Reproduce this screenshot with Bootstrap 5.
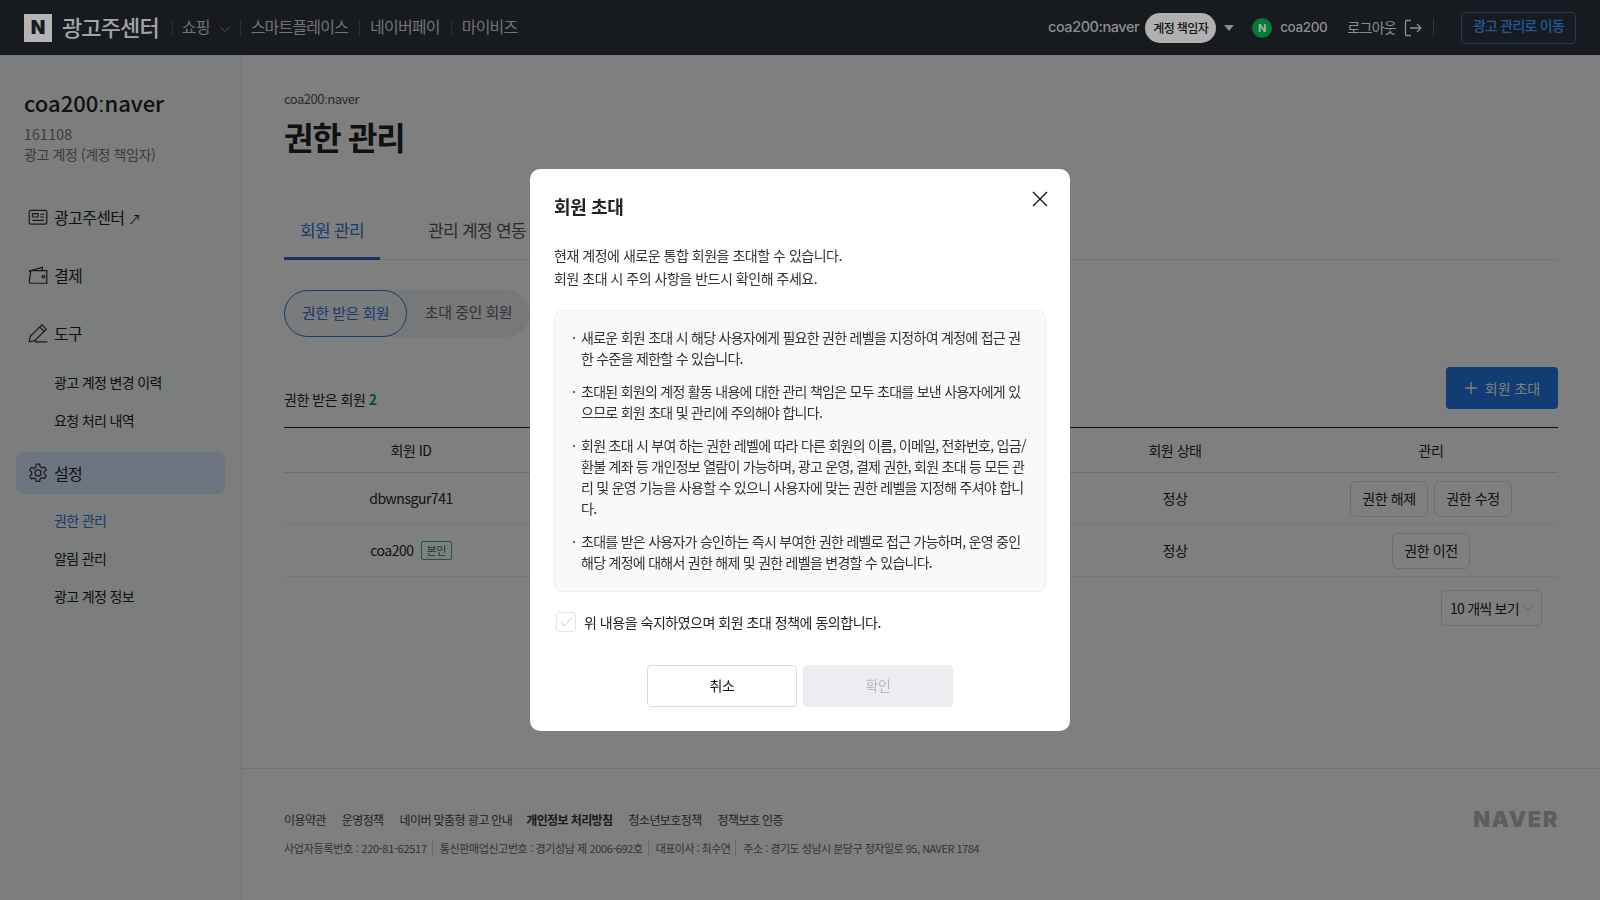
<!DOCTYPE html>
<html lang="ko">
<head>
  <meta charset="UTF-8">
  <meta name="viewport" content="width=device-width, initial-scale=1.0">
  <title>광고주센터 - 권한 관리</title>
  <link href="https://cdn.jsdelivr.net/npm/bootstrap@5.3.0/dist/css/bootstrap.min.css" rel="stylesheet">
  <style>
    html, body { height: 100%; }
    body { font-family: "Noto Sans CJK KR", "Noto Sans", sans-serif; color: #222; background: #fff; overflow: hidden; letter-spacing: -.03em; }
    .page-wrap { height: 900px; }
    .colon-mark { font-family: "Liberation Sans", sans-serif; line-height: 0; }

    .top-bar { height: 55px; background: #171b20; padding: 0 24px; position: relative; z-index: 1060; color: #8e8e8e; }
    .logo-box { width: 28px; height: 28px; background: #b4b4b4; color: #171b20; font: 900 19px/28px "Inter", sans-serif; text-align: center; letter-spacing: 0; }
    .logo-title { font-size: 22px; font-weight: 500; color: #a4a4a4; margin: -2px 0 0 10px; letter-spacing: -.04em; }
    .top-menu { font-size: 16px; color: #747474; margin: -4px 0 0 13px; letter-spacing: -.05em; }
    .top-menu span { padding: 0 11px; position: relative; }
    .top-menu span + span::before, .top-menu span:first-child::before { content: ""; position: absolute; left: 0; top: 6px; bottom: 1px; width: 1px; background: #2b2f34; }
    .top-menu span:first-child { padding-right: 30px; padding-left: 10px; }
    .top-menu svg { position: absolute; right: 9px; top: 9px; }
    .acct-name { font: 500 14.5px "Inter", "Noto Sans CJK KR", sans-serif; letter-spacing: -.03em; margin-top: -2px; }
    .acct-id { font: 500 13.5px "Inter", "Noto Sans CJK KR", sans-serif; letter-spacing: -.03em; margin: -1px 0 0 8px; }
    .acct-pill { background: #b0b0b0; color: #111; font-size: 12px; font-weight: 500; height: 30px; line-height: 30px; width: 71px; text-align: center; border-radius: 15px; margin-left: 6px; letter-spacing: -.05em; }
    .acct-caret { width: 0; height: 0; border-left: 5px solid transparent; border-right: 5px solid transparent; border-top: 6px solid #8e8e8e; margin-left: 8px; }
    .n-circle { width: 20px; height: 20px; border-radius: 50%; background: #047a36; font: 700 11px/20px "Inter", sans-serif; text-align: center; margin-left: 18px; color: #9fb8a8; letter-spacing: 0; }
    .logout-txt { font-size: 14px; margin-left: 20px; letter-spacing: -.05em; }
    .logout-ico { margin-left: 7px; }
    .logout-sep { width: 1px; height: 17px; background: #34383d; margin: 0 27px 0 10px; }
    .go-btn { width: 115px; height: 32px; border: 1px solid #1b3a5c; border-radius: 4px; color: #1f5c99; font-size: 14px; font-weight: 500; line-height: 24px; text-align: center; letter-spacing: -.055em; }

    .side-col { width: 242px; flex: none; background: #f9fafb; border-right: 1px solid #e3e6ea; padding: 32px 16px 0; letter-spacing: -.04em; }
    .side-title { font-size: 22px; font-weight: 500; margin-left: 8px; line-height: 30px; letter-spacing: 0; }
    .side-info { font-size: 14px; color: #777; margin: 7px 0 0 8px; line-height: 20px; letter-spacing: -.03em; }
    .side-code { letter-spacing: .02em; }
    .side-menu { margin-top: 32px; }
    .side-item { height: 42px; display: flex; align-items: center; font-size: 16px; padding-left: 11px; gap: 5px; margin-bottom: 16px; border-radius: 8px; }
    .side-item.is-on { background: #d6e8ff; margin-bottom: 9px; }
    .side-item.has-sub { margin-bottom: 11px; }
    .ext-arrow { font-size: 13px; line-height: 0; }
    .side-sub { margin: -2px 0 13px 17px; border-left: 1px solid #f0f1f3; padding-left: 20px; font-size: 14px; line-height: 38px; }
    .side-sub .is-on { color: #2f77d9; }

    .main-col { min-width: 0; }
    .main-inner { padding: 34px 42px 0; }
    .crumb { font-size: 13px; color: #555; line-height: 20px; }
    .page-h { font-size: 32px; font-weight: 700; line-height: 46px; margin: 4px 0 0; letter-spacing: -.04em; }
    .tab-row { margin-top: 43px; border-bottom: 1px solid #e4e6e9; height: 58px; font-size: 17px; letter-spacing: -.04em; }
    .tab-row span { display: inline-block; height: 58px; line-height: 56px; padding: 0 16px; color: #555; margin-right: 32px; }
    .tab-row .is-on { color: #2f77d9; border-bottom: 3px solid #2a66b8; margin-bottom: -1px; }
    .pill-row { margin-top: 30px; background: #eef0f3; border-radius: 24px; width: 246px; height: 47px; font-size: 15px; }
    .pill-row span { line-height: 44px; height: 47px; text-align: center; color: #666; }
    .pill-row .is-on { width: 123px; border: 1px solid #2f77d9; border-radius: 24px; color: #2f77d9; background: #f4f6f8; }
    .pill-row .pill-off { width: 123px; }
    .count-row { margin-top: 30px; height: 42px; }
    .count-row .count-txt { font-size: 14px; line-height: 42px; margin-top: 11px; }
    .count-row b { color: #0aa14d; font-weight: 700; }
    .invite-btn { width: 112px; height: 42px; background: #2578e8; color: #fff; border: 0; border-radius: 4px; font-size: 14px; display: flex; align-items: center; justify-content: center; gap: 7px; }
    .member-tbl { margin: 18px 0 0; border-top: 1px solid #222; font-size: 14px; table-layout: fixed; }
    .member-tbl th { font-weight: 400; height: 45px; padding: 0; text-align: center; vertical-align: middle; border-bottom: 1px solid #d6d8db; }
    .member-tbl td { height: 52px; padding: 0; text-align: center; vertical-align: middle; border-bottom: 1px solid #eceef0; }
    .btn-pair { gap: 6px; }
    .row-btn { font-size: 14px; height: 36px; width: 78px; padding: 0; border: 1px solid #d8dade; border-radius: 6px; color: #222; background: transparent; letter-spacing: -.03em; }
    .me-tag { display: inline-block; border: 1px solid #2cb37a; color: #0b7a48; font-size: 11px; line-height: 17px; padding: 0 5px; border-radius: 2px; margin-left: 7px; vertical-align: 1px; }
    .page-sel { width: 101px; height: 36px; border: 1px solid #d8dade; border-radius: 4px; font-size: 14px; margin: 13px 16px 0 auto; padding: 0 7px 0 8px; white-space: nowrap; letter-spacing: -.055em; }

    .foot { border-top: 1px solid #e4e6e9; height: 132px; padding: 41px 42px 0; }
    .foot-links { font-size: 12px; color: #444; line-height: 20px; gap: 16px; letter-spacing: -.05em; }
    .foot-links b { font-weight: 700; color: #333; margin-left: -2px; }
    .foot-corp { font-size: 11px; color: #666; line-height: 18px; margin-top: 9px; letter-spacing: -.025em; }
    .foot-corp span + span { border-left: 1px solid #d0d2d5; margin-left: 5px; padding-left: 7px; }
    .foot-corp span:nth-child(2) { letter-spacing: -.035em; }
    .foot-corp span:nth-child(3) { letter-spacing: -.05em; }
    .foot-corp span:nth-child(4) { letter-spacing: -.045em; }
    .foot-logo { font: 900 22px/22px "Inter", sans-serif; color: #b4bcc6; letter-spacing: .07em; margin: -2px -1px 0 0; }

    .modal-dialog.invite-dlg { max-width: 540px; width: 540px; }
    .invite-dlg .modal-content { border: 0; border-radius: 10px; padding: 24px; height: 562px; display: block; }
    .dlg-title { font-size: 18px; font-weight: 700; line-height: 26px; letter-spacing: -.02em; }
    .dlg-close { position: absolute; top: 20px; right: 20px; background: none; border: 0; padding: 0; width: 20px; height: 20px; line-height: 0; }
    .dlg-intro { font-size: 14px; line-height: 23px; margin: 25px 0 0; color: #333; }
    .dlg-box { margin-top: 20px; height: 282px; background: #f8f9fb; border: 1px solid #eceef2; border-radius: 8px; padding: 16px 16px 0 18px; font-size: 14px; line-height: 21px; color: #333; list-style: none; word-break: break-all; letter-spacing: -.052em; }
    .dlg-box li { position: relative; padding-left: 8px; margin-bottom: 12px; }
    .dlg-box li::before { content: ""; position: absolute; left: 0; top: 10px; width: 2px; height: 2px; background: #666; }
    .dlg-check { margin: 20px 0 0 2px; gap: 8px; font-size: 14px; height: 20px; line-height: 20px; color: #222; }
    .dlg-tick { width: 20px; height: 20px; border: 1px solid #e4e6ea; border-radius: 3px; display: flex; align-items: center; justify-content: center; }
    .dlg-actions { margin-top: 33px; gap: 6px; }
    .dlg-actions .btn { width: 150px; height: 42px; font-size: 14px; padding: 0 0 2px; border-radius: 4px; letter-spacing: -.03em; }
    .btn-cancel { border: 1px solid #d8dbe3; background: #fff; color: #111; }
    .btn-ok { border: 1px solid #ebedf0; background: #ebedf0; color: #b5b9c0; }
  </style>
</head>
<body>
  <div class="page-wrap d-flex flex-column">
    <!-- top bar -->
    <div class="top-bar d-flex align-items-center flex-none">
      <div class="logo-box">N</div>
      <div class="logo-title">광고주센터</div>
      <div class="top-menu d-flex">
        <span>쇼핑<svg width="12" height="12" viewBox="0 0 12 12" fill="none" stroke="#555" stroke-width="1"><path d="M1.5 4l4.5 4.5L10.500 4"/></svg></span>
        <span>스마트플레이스</span>
        <span>네이버페이</span>
        <span>마이비즈</span>
      </div>
      <div class="ms-auto d-flex align-items-center">
        <span class="acct-name">coa200:naver</span>
        <span class="acct-pill">계정 책임자</span>
        <span class="acct-caret"></span>
        <span class="n-circle">N</span>
        <span class="acct-id">coa200</span>
        <span class="logout-txt">로그아웃</span>
        <svg class="logout-ico" width="20" height="20" viewBox="0 0 20 20" fill="none" stroke="#8e8e8e" stroke-width="1.300"><path d="M8 2.500H3.500a1 1 0 0 0-1 1v13a1 1 0 0 0 1 1H8M7 10h11M14 6l4 4-4 4"/></svg>
        <span class="logout-sep"></span>
        <span class="go-btn">광고 관리로 이동</span>
      </div>
    </div>

    <div class="d-flex flex-grow-1" style="min-height:0">
      <!-- sidebar -->
      <div class="side-col">
        <div class="side-title">coa200<span class="colon-mark">:</span>naver</div>
        <div class="side-info"><span class="side-code">161108</span><br>광고 계정 (계정 책임자)</div>
        <div class="side-menu">
          <div class="side-item">
            <svg width="22" height="22" viewBox="0 0 20 20" fill="none" stroke="#333" stroke-width="1.100"><rect x="2" y="4" width="16" height="12.500" rx="1.500"/><path d="M5 7h5v3H5zM12 7.500h3.500M12 10h3.500M5 13h10.500"/></svg>
            <span>광고주센터 <span class="ext-arrow">↗</span></span>
          </div>
          <div class="side-item">
            <svg width="22" height="22" viewBox="0 0 20 20" fill="none" stroke="#333" stroke-width="1.100"><path d="M2 7.500A1.500 1.500 0 0 1 3.500 6L14 3v3M3.500 6H18v11.500H3.500A1.500 1.500 0 0 1 2 16z"/><circle cx="15" cy="11.500" r="1.200"/></svg>
            <span>결제</span>
          </div>
          <div class="side-item has-sub">
            <svg width="22" height="22" viewBox="0 0 20 20" fill="none" stroke="#333" stroke-width="1.100"><path d="M2 18l1-5L13.500 2.500l4 4L7 17zM7 18h11.500M11.500 4.500l4 4"/></svg>
            <span>도구</span>
          </div>
          <div class="side-sub">
            <div>광고 계정 변경 이력</div>
            <div>요청 처리 내역</div>
          </div>
          <div class="side-item is-on">
            <svg width="22" height="22" viewBox="0 0 20 20" fill="none" stroke="#333" stroke-width="1.100"><circle cx="10" cy="10" r="2.800"/><path d="M8.500 2h3l.5 2.400 1.700 1 2.300-.8 1.500 2.600-1.800 1.600v2l1.800 1.600-1.500 2.600-2.300-.8-1.700 1-.5 2.400h-3L8 15.600l-1.700-1-2.300.8-1.500-2.600 1.800-1.600v-2L2.500 7.600 4 5l2.300.8 1.700-1z" stroke-linejoin="round"/></svg>
            <span>설정</span>
          </div>
          <div class="side-sub">
            <div class="is-on">권한 관리</div>
            <div>알림 관리</div>
            <div>광고 계정 정보</div>
          </div>
        </div>
      </div>

      <!-- main -->
      <div class="main-col flex-grow-1 d-flex flex-column">
        <div class="main-inner flex-grow-1">
          <div class="crumb">coa200<span class="colon-mark">:</span>naver</div>
          <h1 class="page-h">권한 관리</h1>
          <div class="tab-row"><span class="is-on">회원 관리</span><span>관리 계정 연동</span></div>
          <div class="pill-row d-flex"><span class="is-on">권한 받은 회원</span><span class="pill-off">초대 중인 회원</span></div>
          <div class="count-row d-flex justify-content-between">
            <div class="count-txt">권한 받은 회원 <b>2</b></div>
            <button class="invite-btn" type="button">
              <svg width="14" height="14" viewBox="0 0 14 14" stroke="#fff" stroke-width="1.300"><path d="M7 1v12M1 7h12"/></svg>회원 초대
            </button>
          </div>
          <table class="table member-tbl">
            <colgroup><col style="width:254px"><col><col style="width:258px"><col style="width:254px"></colgroup>
            <thead><tr><th>회원 ID</th><th></th><th>회원 상태</th><th>관리</th></tr></thead>
            <tbody>
              <tr><td>dbwnsgur741</td><td></td><td>정상</td><td><div class="d-flex justify-content-center btn-pair"><button class="btn row-btn" type="button">권한 해제</button><button class="btn row-btn" type="button">권한 수정</button></div></td></tr>
              <tr><td>coa200<span class="me-tag">본인</span></td><td></td><td>정상</td><td><button class="btn row-btn" type="button">권한 이전</button></td></tr>
            </tbody>
          </table>
          <div class="page-sel d-flex align-items-center justify-content-between">
            <span>10 개씩 보기</span>
            <svg width="12" height="12" viewBox="0 0 12 12" fill="none" stroke="#aaa" stroke-width="1"><path d="M1 3.500l5 5 5-5"/></svg>
          </div>
        </div>
        <div class="foot d-flex justify-content-between">
          <div>
            <div class="foot-links d-flex"><span>이용약관</span><span>운영정책</span><span>네이버 맞춤형 광고 안내</span><b>개인정보 처리방침</b><span>청소년보호정책</span><span>정책보호 인증</span></div>
            <div class="foot-corp"><span>사업자등록번호 : 220-81-62517</span><span>통신판매업신고번호 : 경기성남 제 2006-692호</span><span>대표이사 : 최수연</span><span>주소 : 경기도 성남시 분당구 정자일로 95, NAVER 1784</span></div>
          </div>
          <div class="foot-logo">NAVER</div>
        </div>
      </div>
    </div>
  </div>

  <!-- invite dialog -->
  <div class="modal-backdrop show"></div>
  <div class="modal d-block" tabindex="-1">
    <div class="modal-dialog modal-dialog-centered invite-dlg">
      <div class="modal-content">
        <div class="dlg-title">회원 초대</div>
        <button class="dlg-close" type="button" aria-label="닫기">
          <svg width="20" height="20" viewBox="0 0 20 20" fill="none" stroke="#111" stroke-width="1.400"><path d="M3 3l14 14M17 3L3 17"/></svg>
        </button>
        <p class="dlg-intro">현재 계정에 새로운 통합 회원을 초대할 수 있습니다.<br>회원 초대 시 주의 사항을 반드시 확인해 주세요.</p>
        <ul class="dlg-box">
          <li>새로운 회원 초대 시 해당 사용자에게 필요한 권한 레벨을 지정하여 계정에 접근 권한 수준을 제한할 수 있습니다.</li>
          <li>초대된 회원의 계정 활동 내용에 대한 관리 책임은 모두 초대를 보낸 사용자에게 있으므로 회원 초대 및 관리에 주의해야 합니다.</li>
          <li>회원 초대 시 부여 하는 권한 레벨에 따라 다른 회원의 이름, 이메일, 전화번호, 입금/환불 계좌 등 개인정보 열람이 가능하며, 광고 운영, 결제 권한, 회원 초대 등 모든 관리 및 운영 기능을 사용할 수 있으니 사용자에 맞는 권한 레벨을 지정해 주셔야 합니다.</li>
          <li>초대를 받은 사용자가 승인하는 즉시 부여한 권한 레벨로 접근 가능하며, 운영 중인 해당 계정에 대해서 권한 해제 및 권한 레벨을 변경할 수 있습니다.</li>
        </ul>
        <div class="dlg-check d-flex align-items-center">
          <span class="dlg-tick"><svg width="12" height="12" viewBox="0 0 12 12" fill="none" stroke="#dfe1e5" stroke-width="1.300"><path d="M1 6l3.500 4L11 2"/></svg></span>
          <span>위 내용을 숙지하였으며 회원 초대 정책에 동의합니다.</span>
        </div>
        <div class="dlg-actions d-flex justify-content-center">
          <button class="btn btn-cancel" type="button">취소</button>
          <button class="btn btn-ok" type="button">확인</button>
        </div>
      </div>
    </div>
  </div>

  <script src="https://cdn.jsdelivr.net/npm/bootstrap@5.3.0/dist/js/bootstrap.bundle.min.js"></script>
</body>
</html>
